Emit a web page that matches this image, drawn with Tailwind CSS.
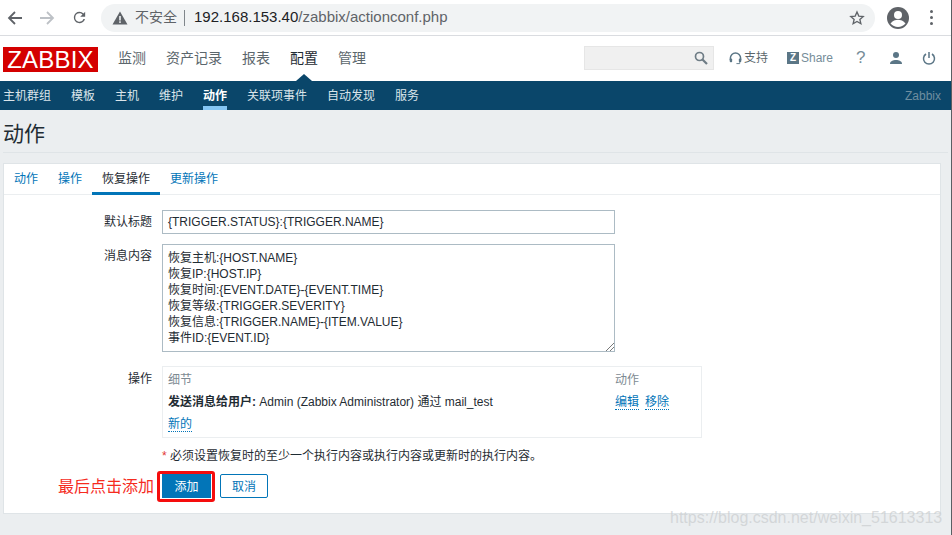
<!DOCTYPE html>
<html lang="zh">
<head>
<meta charset="utf-8">
<script src="https://cdn.jsdelivr.net/npm/@tailwindcss/browser@4"></script>
</head>
<body class="m-0 overflow-hidden">
<div class="relative w-[952px] h-[535px] overflow-hidden bg-[#ebeef0] border-r border-[#5a5f63] font-['Liberation_Sans','Noto_Sans_CJK_SC',sans-serif] text-[12px] text-[#1f2c33]">

  <!-- browser bar -->
  <div class="h-[36px] bg-white border-b border-[#dadce0] flex items-center pl-[7px]">
    <svg class="w-[16px] h-[16px]" viewBox="0 0 16 16" fill="none" stroke="#5f6368" stroke-width="1.8"><path d="M15 8H2M8 2L2 8l6 6"/></svg>
    <svg class="w-[16px] h-[16px] ml-[16px]" viewBox="0 0 16 16" fill="none" stroke="#bdc1c6" stroke-width="1.8"><path d="M1 8h13M8 2l6 6-6 6"/></svg>
    <svg class="w-[17px] h-[17px] ml-[16px]" viewBox="0 0 24 24" fill="#5f6368"><path d="M17.65 6.35A7.96 7.96 0 0 0 12 4a8 8 0 1 0 7.73 10h-2.08A6 6 0 1 1 12 6c1.66 0 3.14.69 4.22 1.78L13 11h7V4l-2.35 2.35z"/></svg>
    <div class="ml-[13px] w-[774px] h-[28px] rounded-full bg-[#f1f3f4] flex items-center pl-[11px] pr-[10px]">
      <svg class="w-[16px] h-[14px]" viewBox="0 0 16 14" fill="#5f6368"><path d="M8 0.5L15.5 13.5H0.5z"/><rect x="7.2" y="5" width="1.6" height="4.5" fill="#f1f3f4"/><rect x="7.2" y="10.3" width="1.6" height="1.6" fill="#f1f3f4"/></svg>
      <span class="ml-[7px] text-[14px] text-[#5f6368]">不安全</span>
      <span class="ml-[7px] w-px h-[16px] bg-[#80868b]"></span>
      <span class="ml-[9px] text-[15px] text-[#5f6368]"><span class="text-[#202124]">192.168.153.40</span>/zabbix/actionconf.php</span>
      <svg class="ml-auto w-[16px] h-[16px]" viewBox="0 0 24 24" fill="none" stroke="#5f6368" stroke-width="2"><path d="M12 3l2.7 6.1 6.6.6-5 4.4 1.5 6.5L12 17.2l-5.8 3.4 1.5-6.5-5-4.4 6.6-.6z"/></svg>
    </div>
    <svg class="ml-[11px] w-[24px] h-[24px]" viewBox="0 0 24 24"><circle cx="12" cy="12" r="11" fill="#5f6368"/><circle cx="12" cy="9" r="4" fill="#fff"/><path d="M4.5 17.5c2-3 5-3.8 7.5-3.8s5.5.8 7.5 3.8c-2 2.3-4.6 3.5-7.5 3.5s-5.500-1.200-7.500-3.500z" fill="#fff"/></svg>
    <div class="ml-[20px] flex flex-col gap-[3px]"><i class="block w-[3px] h-[3px] rounded-full bg-[#5f6368]"></i><i class="block w-[3px] h-[3px] rounded-full bg-[#5f6368]"></i><i class="block w-[3px] h-[3px] rounded-full bg-[#5f6368]"></i></div>
  </div>

  <!-- top nav -->
  <div class="relative h-[45px] bg-white flex items-center pl-[3px]">
    <div class="w-[95px] h-[25px] bg-[#d40000] text-white text-[24px] leading-[25px] text-center tracking-[0.2px] mt-[1px]">ZABBIX</div>
    <nav class="ml-[20px] flex gap-[20px] text-[14px] text-[#5b666c] mb-[1px]">
      <span>监测</span><span>资产记录</span><span>报表</span><span class="text-[#1f2c33]">配置</span><span>管理</span>
    </nav>
    <div class="absolute left-[584px] top-[10px] w-[130px] h-[24px] bg-[#f0f0f0] border border-[#e6e6e6] flex items-center justify-end pr-[5px]">
      <svg class="w-[14px] h-[14px]" viewBox="0 0 14 14" fill="none" stroke="#6e7c85" stroke-width="1.7"><circle cx="5.500" cy="5.500" r="4"/><path d="M8.500 8.500L13 13" stroke-width="2.200"/></svg>
    </div>
    <div class="absolute left-[729px] top-[10px] h-[24px] flex items-center text-[#768d99]">
      <svg class="w-[13px] h-[13px]" viewBox="0 0 14 14" fill="none" stroke="#5b7686" stroke-width="1.600"><path d="M1.500 9V6.500a5.500 5.500 0 0 1 11 0V9"/><rect x="0.800" y="7" width="2.600" height="4" rx="1" fill="#5b7686" stroke="none"/><rect x="10.600" y="7" width="2.600" height="4" rx="1" fill="#5b7686" stroke="none"/><path d="M11.500 11v1.500H8" stroke-width="1"/></svg>
      <span class="ml-[2px] text-[#5b666c]">支持</span>
    </div>
    <div class="absolute left-[787px] top-[10px] h-[24px] flex items-center">
      <span class="w-[12px] h-[12px] bg-[#5b7686] text-white text-[10px] leading-[12px] font-bold text-center">Z</span>
      <span class="ml-[2px] text-[#768d99]">Share</span>
    </div>
    <span class="absolute left-[856px] top-[12px] text-[#768d99] text-[17px] leading-[20px]">?</span>
    <svg class="absolute left-[889px] top-[15px] w-[14px] h-[14px]" viewBox="0 0 14 14" fill="#5b7686"><circle cx="7" cy="4" r="3"/><path d="M1 13c0-3 3-4 6-4s6 1 6 4z"/></svg>
    <svg class="absolute left-[922px] top-[15px] w-[14px] h-[14px]" viewBox="0 0 14 14" fill="none" stroke="#5b7686" stroke-width="1.500"><path d="M7 1v6M4 3a5.500 5.500 0 1 0 6 0"/></svg>
    <span class="absolute left-[296px] bottom-0 w-0 h-0 border-x-[8px] border-x-transparent border-b-[7px] border-b-[#0a466a]"></span>
  </div>

  <!-- sub nav -->
  <div class="h-[29px] bg-[#0a466a] flex pl-[3px] text-[12px] text-[#dbe5ea] leading-[31px]">
    <span>主机群组</span><span class="ml-[20px]">模板</span><span class="ml-[20px]">主机</span><span class="ml-[20px]">维护</span>
    <span class="ml-[20px] h-[29px] border-b-[4px] border-[#84c6f4] text-white font-bold">动作</span>
    <span class="ml-[20px]">关联项事件</span><span class="ml-[20px]">自动发现</span><span class="ml-[20px]">服务</span>
    <span class="ml-auto mr-[10px] text-[#6f8ea0]">Zabbix</span>
  </div>

  <!-- title -->
  <div class="mx-[3px] h-[43px] border-b border-[#dfe4e7] flex items-center">
    <h1 class="text-[21px] leading-[24px] font-normal text-[#1f2c33] mt-[6px]">动作</h1>
  </div>

  <!-- card -->
  <div class="absolute left-[3px] top-[163px] w-[938px] h-[351px] bg-white border border-[#dfe4e7]">
    <div class="h-[31px] border-b border-[#ebeef0] flex text-[#0275b8] leading-[30px]">
      <span class="px-[10px]">动作</span>
      <span class="px-[10px]">操作</span>
      <span class="px-[10px] h-[31px] border-b-[3px] border-[#0275b8] text-[#1f2c33]">恢复操作</span>
      <span class="px-[10px]">更新操作</span>
    </div>

    <div class="relative flex flex-col pt-[15px]">
      <div class="flex">
        <label class="w-[148px] text-right leading-[24px] text-[#1f2c33]">默认标题</label>
        <div class="ml-[10px] w-[453px] h-[24px] border border-[#acbbc4] px-[5px] leading-[22px]">{TRIGGER.STATUS}:{TRIGGER.NAME}</div>
      </div>
      <div class="flex mt-[10px]">
        <label class="w-[148px] text-right leading-[24px]">消息内容</label>
        <div class="relative ml-[10px] w-[453px] h-[108px] border border-[#acbbc4] px-[5px] py-[5px] leading-[16px]">
          <div>恢复主机:{HOST.NAME}</div>
          <div>恢复IP:{HOST.IP}</div>
          <div>恢复时间:{EVENT.DATE}-{EVENT.TIME}</div>
          <div>恢复等级:{TRIGGER.SEVERITY}</div>
          <div>恢复信息:{TRIGGER.NAME}-{ITEM.VALUE}</div>
          <div>事件ID:{EVENT.ID}</div>
          <svg class="absolute right-0 bottom-0 w-[9px] h-[9px]" viewBox="0 0 9 9" stroke="#555" stroke-width="0.800"><path d="M1 9L9 1M5 9l4-4"/></svg>
        </div>
      </div>
      <div class="flex mt-[14px]">
        <label class="w-[148px] text-right leading-[26px]">操作</label>
        <div class="ml-[10px] w-[540px] h-[72px] border border-[#ebeef0] pl-[5px] relative">
          <div class="mt-[4px] leading-[18px] text-[#7d8a92] flex"><span class="w-[447px]">细节</span><span>动作</span></div>
          <div class="mt-[4px] leading-[18px] flex"><span class="w-[447px]"><b>发送消息给用户:</b> Admin (Zabbix Administrator) 通过 mail_test</span>
            <span class="text-[#0275b8]"><span class="border-b border-dotted border-[#0275b8]">编辑</span><span class="ml-[6px] border-b border-dotted border-[#0275b8]">移除</span></span></div>
          <div class="mt-[4px] leading-[18px] text-[#0275b8]"><span class="border-b border-dotted border-[#0275b8]">新的</span></div>
        </div>
      </div>
      <div class="ml-[158px] mt-[9px] leading-[18px]"><span class="text-[#e33734]">*</span> 必须设置恢复时的至少一个执行内容或执行内容或更新时的执行内容。</div>
      <div class="flex ml-[158px] mt-[9px] relative">
        <button class="w-[49px] h-[24px] bg-[#0275b8] text-white text-[12px] leading-[22px] border border-[#0275b8] pt-[1px]">添加</button>
        <button class="ml-[9px] w-[48px] h-[24px] bg-white text-[#0275b8] text-[12px] leading-[22px] border border-[#0275b8] rounded-[2px] pt-[1px]">取消</button>
        <span class="absolute left-[-5px] top-[-3px] w-[58px] h-[31px] border-[3px] border-[#f50d0d] rounded-[3px]"></span>
        <span class="absolute left-[-104px] top-[2px] text-[16px] leading-[22px] text-[#f52b1e]">最后点击添加</span>
      </div>
    </div>
  </div>

  <div class="absolute left-[670px] top-[505px] text-[16px] leading-[26px] text-[#c9ccce]/70">https://blog.csdn.net/weixin_51613313</div>
</div>
</body>
</html>
